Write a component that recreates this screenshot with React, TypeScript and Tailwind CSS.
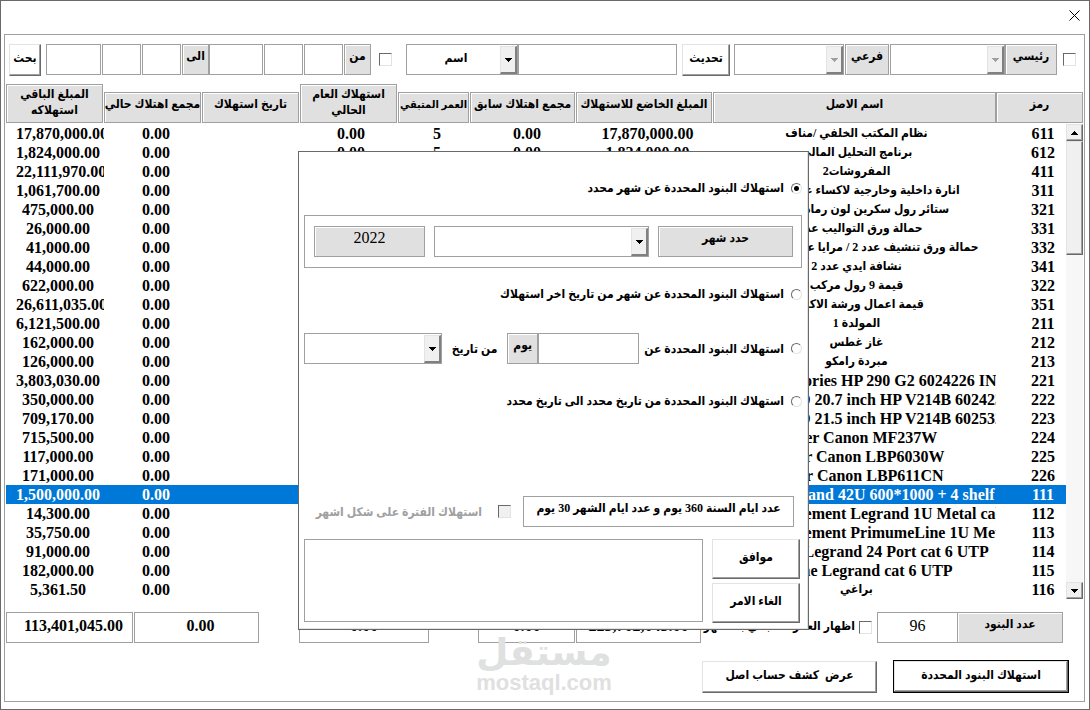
import { useState, type ReactNode } from "react";
import clsx from "clsx";

type Asset = {
  code: string;
  name: string;
  amount: string;
  remaining: string;
};

const assets: Asset[] = [
  { code: "611", name: "نظام المكتب الخلفي /مناف", amount: "17,870,000.00", remaining: "17,870,000.00" },
  { code: "612", name: "برنامج التحليل المالي", amount: "1,824,000.00", remaining: "1,824,000.00" },
  { code: "411", name: "المفروشات2", amount: "22,111,970.00", remaining: "22,111,970.00" },
  { code: "311", name: "انارة داخلية وخارجية لاكساء عدد 2 طابق", amount: "1,061,700.00", remaining: "1,061,700.00" },
  { code: "321", name: "ستائر رول سكرين لون رمادي عدد 2", amount: "475,000.00", remaining: "475,000.00" },
  { code: "331", name: "حمالة ورق التواليب عدد 2", amount: "26,000.00", remaining: "26,000.00" },
  { code: "332", name: "حمالة ورق تنشيف عدد 2 / مرايا عدد 2 للحمامات", amount: "41,000.00", remaining: "41,000.00" },
  { code: "341", name: "نشافة ايدي عدد 2", amount: "44,000.00", remaining: "44,000.00" },
  { code: "322", name: "قيمة 9 رول مركب", amount: "622,000.00", remaining: "622,000.00" },
  { code: "351", name: "قيمة اعمال ورشة الاكساء", amount: "26,611,035.00", remaining: "26,611,035.00" },
  { code: "211", name: "المولدة 1", amount: "6,121,500.00", remaining: "6,121,500.00" },
  { code: "212", name: "غاز غطس", amount: "162,000.00", remaining: "162,000.00" },
  { code: "213", name: "مبردة رامكو", amount: "126,000.00", remaining: "126,000.00" },
  { code: "221", name: "PC & Accessories HP 290 G2 6024226 INV", amount: "3,803,030.00", remaining: "3,803,030.00" },
  { code: "222", name: "Monitor LED 20.7 inch HP V214B 6024231", amount: "350,000.00", remaining: "350,000.00" },
  { code: "223", name: "Monitor LED 21.5 inch HP V214B 6025321", amount: "709,170.00", remaining: "709,170.00" },
  { code: "224", name: "Printer Canon MF237W", amount: "715,500.00", remaining: "715,500.00" },
  { code: "225", name: "Printer Canon LBP6030W", amount: "117,000.00", remaining: "117,000.00" },
  { code: "226", name: "Printer Canon LBP611CN", amount: "171,000.00", remaining: "171,000.00" },
  { code: "111", name: "Cabinet Legrand 42U 600*1000 + 4 shelf", amount: "1,500,000.00", remaining: "1,500,000.00" },
  { code: "112", name: "Rack Management Legrand 1U Metal cable", amount: "14,300.00", remaining: "14,300.00" },
  { code: "113", name: "Rack Management PrimumeLine 1U Metal", amount: "35,750.00", remaining: "35,750.00" },
  { code: "114", name: "Patch Panel Legrand 24 Port cat 6 UTP", amount: "91,000.00", remaining: "91,000.00" },
  { code: "115", name: "Keystone Legrand cat 6 UTP", amount: "182,000.00", remaining: "182,000.00" },
  { code: "116", name: "براغي", amount: "5,361.50", remaining: "5,361.50" },
];

const isLatin = (text: string) => /^[A-Z]/.test(text);

function Arrow({ up = false, muted = false }: { up?: boolean; muted?: boolean }) {
  return (
    <svg width="7" height="4" viewBox="0 0 7 4" className={muted ? "fill-[#a0a0a0]" : "fill-black"} shapeRendering="crispEdges" aria-hidden="true">
      <path d={up ? "M3 0h1v1h1v1h1v1h1v1H0V3h1V2h1V1h1z" : "M0 0h7v1H6v1H5v1H4v1H3V3H2V2H1V1H0z"} />
    </svg>
  );
}

function Combo({ label, className, options = [], disabled = false }: { label: string; className?: string; options?: string[]; disabled?: boolean }) {
  return (
    <div className={clsx("relative h-[31px] border border-[#a0a0a0] bg-white", className)}>
      <select aria-label={label} disabled={disabled} className="size-full appearance-none bg-white pr-7 pb-1 pl-4 text-center outline-none">
        {options.map((o) => (
          <option key={o}>{o}</option>
        ))}
      </select>
      <span dir="ltr" className="pointer-events-none absolute top-px right-0 bottom-0 flex w-[17px] items-center justify-center border-t border-r-2 border-b-2 border-l border-t-[#e3e3e3] border-r-[#808080] border-b-[#808080] border-l-[#e3e3e3] bg-[#f0f0f0]">
        <Arrow muted={disabled} />
      </span>
    </div>
  );
}

function Field({ label, className, value }: { label: string; className?: string; value?: string }) {
  return (
    <input
      type="text"
      aria-label={label}
      defaultValue={value}
      className={clsx("h-[31px] min-w-0 border border-[#a0a0a0] bg-white px-1 pb-1 text-center outline-none", className)}
    />
  );
}

function Tag({ children, className }: { children: ReactNode; className?: string }) {
  return (
    <div className={clsx("flex h-[31px] items-center justify-center border border-[#a0a0a0] bg-[#e0e0e0] pb-2 whitespace-nowrap shadow-[inset_1px_1px_0_#fff]", className)}>
      {children}
    </div>
  );
}

function Check({ label, id, className, disabled }: { label?: string; id?: string; className?: string; disabled?: boolean }) {
  return (
    <input
      type="checkbox"
      id={id}
      aria-label={label}
      disabled={disabled}
      className={clsx(
        "size-[13px] shrink-0 appearance-none border border-t-[#696969] border-r-[#e3e3e3] border-b-[#e3e3e3] border-l-[#696969] bg-white checked:bg-[#696969] disabled:bg-[#f0f0f0]",
        className,
      )}
    />
  );
}

function PushButton({ children, className }: { children: ReactNode; className?: string }) {
  return (
    <button
      type="button"
      className={clsx(
        "border border-t-[#e3e3e3] border-r-[#696969] border-b-[#696969] border-l-[#e3e3e3] bg-white pb-1 whitespace-nowrap shadow-[inset_-1px_-1px_0_#a0a0a0]",
        className,
      )}
    >
      {children}
    </button>
  );
}

function FilterBar() {
  return (
    <div className="flex items-start pr-[7px] pl-[3px]">
      <Check label="تصفية حسب الرئيسي" className="mt-[9px]" />
      <Tag className="mr-1.5 w-[52px]">رئيسي</Tag>
      <Combo label="رئيسي" className="w-[115px]" disabled />
      <Tag className="mr-px w-11">فرعي</Tag>
      <Combo label="فرعي" className="mr-px w-[110px]" disabled />
      <PushButton className="mr-1 h-8 w-12">تحديث</PushButton>
      <Field label="نص البحث" className="mr-[5px] flex-1" />
      <Combo label="حقل البحث" className="w-28" options={["اسم", "رمز"]} />
      <Check label="تصفية حسب التاريخ" className="mt-[9px] mr-3.5" />
      <Tag className="mr-2 w-[27px]">من</Tag>
      <Field label="من يوم" className="mr-px w-[39px]" />
      <Field label="من شهر" className="mr-px w-[39px]" />
      <Field label="من سنة" className="mr-px w-[54px]" />
      <Tag className="w-[27px]">الى</Tag>
      <Field label="الى يوم" className="mr-px w-[39px]" />
      <Field label="الى شهر" className="mr-px w-[39px]" />
      <Field label="الى سنة" className="mr-px w-[55px]" />
      <PushButton className="mr-[5px] h-8 w-8">بحث</PushButton>
    </div>
  );
}

type HeadProps = { children: ReactNode; tall?: boolean; joined?: boolean; small?: boolean; colSpan?: number };

function Head({ children, tall = false, joined = false, small = false, colSpan }: HeadProps) {
  return (
    <th scope="col" colSpan={colSpan} className={clsx("h-10 p-0 align-bottom", !joined && "pr-px")}>
      <div
        className={clsx(
          "mb-px flex items-center justify-center border border-[#a0a0a0] bg-[#e0e0e0] leading-4 shadow-[inset_1px_1px_0_#fff]",
          tall ? "h-[39px] pb-1 whitespace-pre-line" : "h-[31px] pb-2 whitespace-nowrap",
          small && "text-[11px]",
        )}
      >
        {children}
      </div>
    </th>
  );
}

function Cell({ children, className }: { children?: ReactNode; className?: string }) {
  return (
    <td className="h-[19px] p-0">
      <div dir="ltr" className={clsx("h-[19px] overflow-hidden text-center text-base leading-[19px] whitespace-nowrap", className)}>
        {children}
      </div>
    </td>
  );
}

function NameCell({ name }: { name: string }) {
  if (isLatin(name)) return <Cell className="pr-1.5 pl-1">{name}</Cell>;
  return (
    <Cell className="pl-1">
      <bdi dir="rtl" className="block text-xs leading-[19px]">{name}</bdi>
    </Cell>
  );
}

const scrollButton =
  "flex h-[17px] w-full items-center justify-center border border-t-[#e3e3e3] border-r-[#696969] border-b-[#696969] border-l-[#e3e3e3] bg-[#f0f0f0] shadow-[inset_-1px_-1px_0_#a0a0a0]";

function ScrollBar({ rows }: { rows: number }) {
  return (
    <td rowSpan={rows} className="p-0 align-top">
      <div className="flex h-[475px] flex-col bg-[#f7f7f7]">
        <button type="button" aria-label="أعلى" className={scrollButton}>
          <Arrow up />
        </button>
        <div className="h-[114px] border border-t-[#e3e3e3] border-r-[#696969] border-b-[#696969] border-l-[#e3e3e3] bg-[#f0f0f0] shadow-[inset_-1px_-1px_0_#a0a0a0]" />
        <button type="button" aria-label="أسفل" className={clsx(scrollButton, "mt-auto")}>
          <Arrow />
        </button>
      </div>
    </td>
  );
}

function AssetTable() {
  const [selected, setSelected] = useState("111");

  return (
    <table className="mt-2 w-full table-fixed border-collapse">
      <colgroup>
        <col className="w-[17px]" />
        <col className="w-[70px]" />
        <col />
        <col className="w-[137px]" />
        <col className="w-[106px]" />
        <col className="w-[72px]" />
        <col className="w-[98px]" />
        <col className="w-[98px]" />
        <col className="w-[98px]" />
        <col className="w-[98px]" />
      </colgroup>
      <thead>
        <tr>
          <Head colSpan={2} joined>رمز</Head>
          <Head joined>اسم الاصل</Head>
          <Head>المبلغ الخاضع للاستهلاك</Head>
          <Head>مجمع اهتلاك سابق</Head>
          <Head small>العمر المتبقي</Head>
          <Head tall>{"استهلاك العام\nالحالي"}</Head>
          <Head>تاريخ استهلاك</Head>
          <Head>مجمع اهتلاك حالي</Head>
          <Head tall>{"المبلغ الباقي\nاستهلاكه"}</Head>
        </tr>
      </thead>
      <tbody>
        {assets.map((a, i) => (
          <tr
            key={a.code}
            onClick={() => setSelected(a.code)}
            className={clsx(a.code === selected && "bg-[#0078d7] text-white")}
          >
            {i === 0 && <ScrollBar rows={assets.length} />}
            <Cell className="pl-6">{a.code}</Cell>
            <NameCell name={a.name} />
            <Cell className="pl-1.5">{a.amount}</Cell>
            <Cell className="pl-2">0.00</Cell>
            <Cell className="pl-1.5">5</Cell>
            <Cell className="pl-1">0.00</Cell>
            <Cell />
            <Cell className="pl-1.5">0.00</Cell>
            <Cell className="pr-1 pl-2.5">{a.remaining}</Cell>
          </tr>
        ))}
      </tbody>
    </table>
  );
}

function Totals() {
  return (
    <div className="mt-[13px] flex items-start pr-5">
      <Tag className="w-[106px]">عدد البنود</Tag>
      <Field label="عدد البنود" value="96" className="w-20 border-r-0 text-base font-normal" />
      <Check id="months" className="mt-[9px] mr-[5px]" />
      <label htmlFor="months" className="mt-1.5 mr-1 flex-1 leading-4 whitespace-nowrap">
        اظهار العمر المتبقي بالاشهر
      </label>
      <Field label="مجموع المبلغ الخاضع" value="223,702,045.00" className="w-[125px] text-base" />
      <Field label="مجموع السابق" value="0.00" className="mr-px w-[97px] text-base" />
      <Field label="مجموع العام الحالي" value="0.00" className="mr-[49px] w-[130px] text-base" />
      <Field label="مجموع الحالي" value="0.00" className="mr-10 w-[125px] pl-3 text-base" />
      <Field label="مجموع الباقي" value="113,401,045.00" className="mr-px w-[127px] pl-3 text-base" />
    </div>
  );
}

function Option({ id, children, checked }: { id: string; children: ReactNode; checked?: boolean }) {
  return (
    <div className="flex items-center gap-[7px] whitespace-nowrap">
      <input
        type="radio"
        name="mode"
        id={id}
        defaultChecked={checked}
        className="size-[11px] appearance-none rounded-full border border-t-[#696969] border-r-[#e3e3e3] border-b-[#e3e3e3] border-l-[#696969] bg-white checked:bg-[radial-gradient(circle,#000_2px,#fff_3px)]"
      />
      <label htmlFor={id}>{children}</label>
    </div>
  );
}

function DepreciationDialog() {
  return (
    <section
      role="dialog"
      aria-label="استهلاك البنود"
      className="absolute top-[150px] left-[297px] flex h-[479px] w-[511px] flex-col border border-[#696969] bg-white pt-[26px] pr-1.5 pl-[5px] shadow-[inset_-1px_-1px_0_#e3e3e3]"
    >
      <div className="h-[37px]">
        <Option id="mode-month" checked>استهلاك البنود المحددة عن شهر محدد</Option>
      </div>
      <div className="flex h-[53px] items-center gap-[9px] border border-[#a0a0a0] pr-2 pl-[9px]">
        <Tag className="w-[135px]">حدد شهر</Tag>
        <Combo label="حدد شهر" className="flex-1" />
        <Tag className="w-[111px] text-base font-normal">2022</Tag>
      </div>
      <div className="pt-4">
        <Option id="mode-last">استهلاك البنود المحددة عن شهر من تاريخ اخر استهلاك</Option>
      </div>
      <div className="mt-[29px] flex items-center">
        <Option id="mode-days">استهلاك البنود المحددة عن</Option>
        <Field label="عدد الايام" className="mr-[5px] w-[101px]" />
        <Tag className="w-[31px]">يوم</Tag>
        <span className="mx-2 flex-1 text-center whitespace-nowrap">من تاريخ</span>
        <Combo label="من تاريخ" className="w-[138px]" />
      </div>
      <div className="mt-[27px]">
        <Option id="mode-range">استهلاك البنود المحددة من تاريخ محدد الى تاريخ محدد</Option>
      </div>
      <div className="mt-auto flex items-center pr-2">
        <div className="flex h-[31px] w-[271px] items-center justify-center border border-[#a0a0a0] pb-2 whitespace-nowrap">
          عدد ايام السنة 360 يوم و عدد ايام الشهر 30 يوم
        </div>
        <Check id="as-months" className="mr-3" disabled />
        <label htmlFor="as-months" className="mr-4 whitespace-nowrap text-[#a0a0a0]">
          استهلاك الفترة على شكل اشهر
        </label>
      </div>
      <div className="mt-3 mb-1.5 flex gap-[9px] pr-0.5">
        <div className="flex w-[88px] flex-col gap-1">
          <PushButton className="h-10">موافق</PushButton>
          <PushButton className="h-10">الغاء الامر</PushButton>
        </div>
        <textarea aria-label="ملاحظات" className="h-[83px] min-w-0 flex-1 resize-none border border-[#a0a0a0] outline-none" />
      </div>
    </section>
  );
}

function Watermark() {
  return (
    <div className="pointer-events-none absolute top-[632px] left-[477px] flex w-[132px] flex-col items-center text-[#dfe0e0]">
      <span className="font-['DejaVu_Sans',sans-serif] text-[37px] leading-10 font-bold">مستقل</span>
      <span dir="ltr" className="font-['Liberation_Sans',sans-serif] text-[22px] leading-5 font-bold">mostaql.com</span>
    </div>
  );
}

export default function App() {
  return (
    <main
      dir="rtl"
      className="relative border border-[#696969] bg-white pb-[7px] font-['Liberation_Serif','DejaVu_Sans_Condensed','DejaVu_Sans',serif] text-[12px] leading-5 font-bold text-black"
    >
      <header dir="ltr" className="flex h-[33px] justify-end pt-[9px] pr-[9px]">
        <button type="button" aria-label="اغلاق" className="size-[11px]">
          <svg width="11" height="11" viewBox="0 0 11 11" className="stroke-black" fill="none">
            <path d="M0.5 0.5l10 10M10.5 0.5l-10 10" />
          </svg>
        </button>
      </header>
      <div className="mr-1 ml-[3px] border border-[#a0a0a0] px-px pt-[9px] pb-2">
        <FilterBar />
        <AssetTable />
        <Totals />
        <div className="mt-[17px] flex h-[33px] items-center gap-4 pr-3.5">
          <button
            type="button"
            className="h-[33px] w-[176px] border border-black bg-white pb-1 shadow-[inset_-1px_-1px_0_#696969,inset_1px_1px_0_#e3e3e3,inset_-2px_-2px_0_#a0a0a0]"
          >
            استهلاك البنود المحددة
          </button>
          <PushButton className="h-8 w-[175px]">عرض&nbsp; كشف حساب اصل</PushButton>
        </div>
      </div>
      <DepreciationDialog />
      <Watermark />
    </main>
  );
}
